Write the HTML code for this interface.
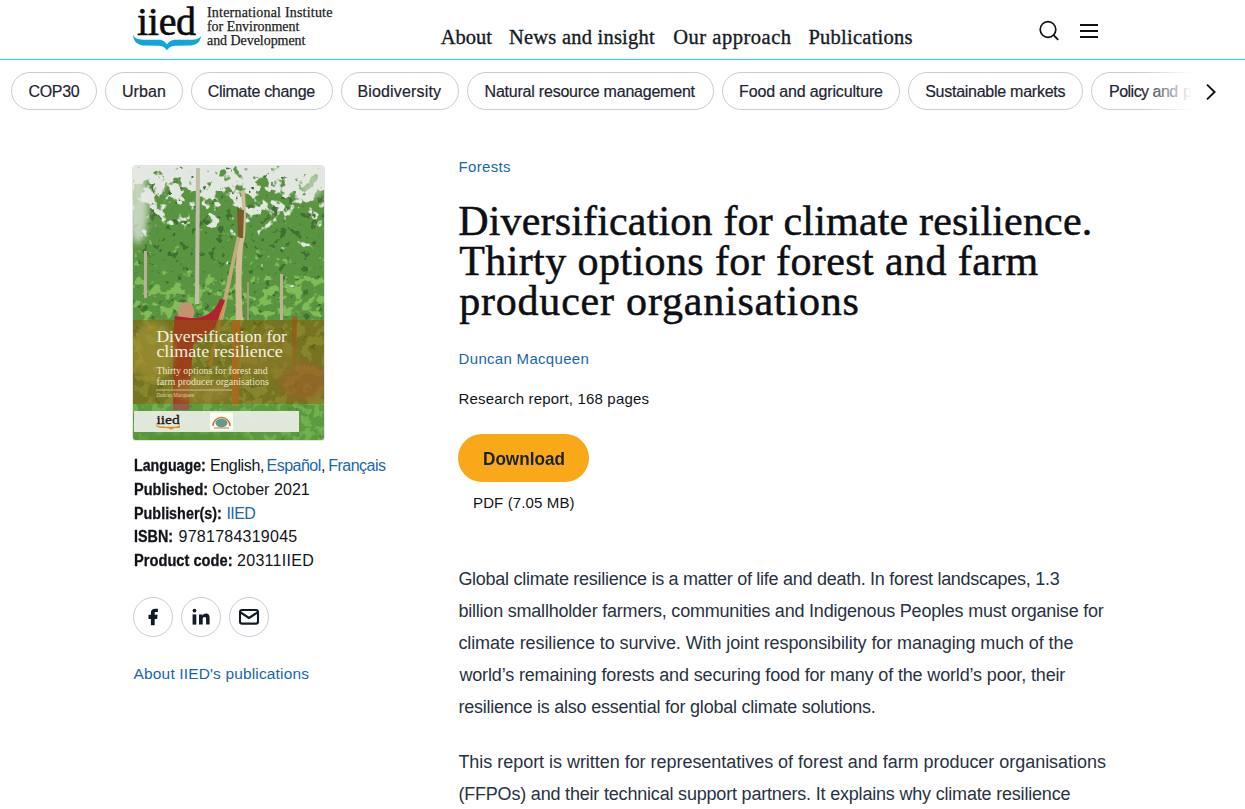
<!DOCTYPE html>
<html lang="en">
<head>
<meta charset="utf-8">
<title>Diversification for climate resilience | IIED</title>
<style>
html,body{margin:0;padding:0;background:#fff;}
body{width:1245px;height:809px;overflow:hidden;position:relative;font-family:"Liberation Sans",sans-serif;}
.s{position:absolute;}
.pill{position:absolute;top:72px;height:36px;border:1px solid #c8ccd5;border-radius:19px;}
.share{position:absolute;top:597px;width:38px;height:38px;border:1px solid #c8ccd5;border-radius:50%;}
.t{position:absolute;white-space:nowrap;line-height:1;margin:0;padding:0;}
.bl{display:inline-block;width:0;height:0;vertical-align:baseline;}
</style>
</head>
<body>
<svg class="s" style="left:130px;top:33px" width="74" height="20" viewBox="0 0 74 20"><path d="M3,2 C3.5,9 8,12.6 16,12.6 L29,12.8 C33.5,13 36,15.5 37,17.6 C38,15.5 40.5,13 45,12.8 L58,12.6 C66,12.6 70.5,9.5 71,3 C69,6.5 65,6.8 58,6.8 L46,6.8 C41,6.8 38.5,9 37,11.6 C35.5,9 33,6.8 28,6.8 L16,6.8 C9,6.8 5,6 3,2 Z" fill="#0fa6dc"/></svg>
<svg class="s" style="left:1038px;top:20px" width="22" height="22" viewBox="0 0 22 22"><circle cx="10" cy="9.5" r="7.8" fill="none" stroke="#111" stroke-width="1.7"/><line x1="15.6" y1="15.1" x2="20.2" y2="19.8" stroke="#111" stroke-width="1.8"/></svg>
<svg class="s" style="left:1080px;top:23px" width="18" height="16" viewBox="0 0 18 16"><rect x="0" y="1" width="18" height="2" fill="#111"/><rect x="0" y="7" width="18" height="2" fill="#111"/><rect x="0" y="13" width="18" height="2" fill="#111"/></svg>
<div class="s" style="left:0;top:59px;width:1245px;height:1px;background:#22d2fd;"></div>
<div class="pill" style="left:11px;width:84px;"></div>
<div class="pill" style="left:105px;width:76px;"></div>
<div class="pill" style="left:191px;width:140px;"></div>
<div class="pill" style="left:341px;width:116px;"></div>
<div class="pill" style="left:467px;width:245px;"></div>
<div class="pill" style="left:722px;width:176px;"></div>
<div class="pill" style="left:908px;width:173px;"></div>
<div class="pill" style="left:1091px;width:200px;"></div>
<div class="s" style="left:458px;top:434px;width:131px;height:48px;border-radius:24px;background:#f9a819;"></div>
<div class="share" style="left:133px;"></div>
<div class="share" style="left:181px;"></div>
<div class="share" style="left:229px;"></div>
<svg class="s" style="left:133px;top:597px" width="40" height="40" viewBox="0 0 40 40"><path d="M17.9,28.2 V21.9 H15.5 V17.7 H17.9 V16 C17.9,13 19.5,11.7 22.3,11.7 H24.9 V15 H23 C22,15 21.7,15.5 21.7,16.5 V17.7 H24.6 L24.1,21.9 H21.7 V28.2 Z" fill="#111a27"/></svg>
<svg class="s" style="left:181px;top:597px" width="40" height="40" viewBox="0 0 40 40"><circle cx="13.5" cy="13.6" r="1.9" fill="#111a27"/><rect x="11.6" y="17.4" width="3.7" height="10.2" fill="#111a27"/><path d="M18,27.6 V17.4 H21.5 V18.7 C22.2,17.4 23.6,16.6 25.1,16.6 C27.6,16.6 28.6,18.2 28.6,21.2 V27.6 H25.1 V21.9 C25.1,20.6 24.6,20 23.6,20 C22.4,20 21.7,20.8 21.7,22.2 V27.6 Z" fill="#111a27"/></svg>
<svg class="s" style="left:229px;top:597px" width="40" height="40" viewBox="0 0 40 40"><rect x="11" y="13" width="18" height="13.6" rx="2.2" fill="none" stroke="#111a27" stroke-width="2.1"/><path d="M11.5,15.4 L20,21 L28.5,15.4" fill="none" stroke="#111a27" stroke-width="2.2" stroke-linejoin="round"/></svg>
<div class="s" style="left:133px;top:166px;width:191px;height:274px;border-radius:3px;overflow:hidden;box-shadow:0 0 0 1px #e3e5e8;">
<svg width="191" height="274" viewBox="0 0 191 274" style="display:block">
<defs>
<filter id="bl3" x="-30%" y="-30%" width="160%" height="160%"><feGaussianBlur stdDeviation="3"/></filter>
<filter id="bl1" x="-20%" y="-20%" width="140%" height="140%"><feGaussianBlur stdDeviation="0.7"/></filter>
<linearGradient id="d1" x1="0" y1="0" x2="0" y2="274" gradientUnits="userSpaceOnUse">
<stop offset="0" stop-color="#505050"/><stop offset="0.12" stop-color="#909090"/><stop offset="0.3" stop-color="#d0d0d0"/><stop offset="1" stop-color="#ffffff"/>
</linearGradient>
<linearGradient id="d2" x1="0" y1="0" x2="0" y2="274" gradientUnits="userSpaceOnUse">
<stop offset="0" stop-color="#404040"/><stop offset="0.2" stop-color="#686868"/><stop offset="0.5" stop-color="#585858"/><stop offset="1" stop-color="#484848"/>
</linearGradient>
<linearGradient id="d3" x1="0" y1="0" x2="0" y2="274" gradientUnits="userSpaceOnUse">
<stop offset="0" stop-color="#000000"/><stop offset="0.25" stop-color="#303030"/><stop offset="0.45" stop-color="#7a7a7a"/><stop offset="1" stop-color="#808080"/>
</linearGradient>
<filter id="lf1" x="0" y="0" width="100%" height="100%" color-interpolation-filters="sRGB">
<feTurbulence type="fractalNoise" baseFrequency="0.08" numOctaves="3" seed="7" result="n"/>
<feColorMatrix in="n" type="matrix" values="1 0 0 0 0  0 1 0 0 0  0 0 1 0 0  0 0 0 0 1" result="n1"/>
<feComposite in="n1" in2="SourceGraphic" operator="arithmetic" k1="0" k2="1" k3="1" k4="-0.5" result="m"/>
<feColorMatrix in="m" type="matrix" values="0 0 0 0 0.35  0 0 0 0 0.58  0 0 0 0 0.25  12 0 0 0 -6"/>
<feGaussianBlur stdDeviation="0.5"/>
</filter>
<filter id="lf2" x="0" y="0" width="100%" height="100%" color-interpolation-filters="sRGB">
<feTurbulence type="fractalNoise" baseFrequency="0.13" numOctaves="3" seed="21" result="n"/>
<feColorMatrix in="n" type="matrix" values="1 0 0 0 0  0 1 0 0 0  0 0 1 0 0  0 0 0 0 1" result="n1"/>
<feComposite in="n1" in2="SourceGraphic" operator="arithmetic" k1="0" k2="1" k3="1" k4="-0.5" result="m"/>
<feColorMatrix in="m" type="matrix" values="0 0 0 0 0.25  0 0 0 0 0.44  0 0 0 0 0.19  12 0 0 0 -6"/>
<feGaussianBlur stdDeviation="0.5"/>
</filter>
<filter id="lf3" x="0" y="0" width="100%" height="100%" color-interpolation-filters="sRGB">
<feTurbulence type="fractalNoise" baseFrequency="0.1" numOctaves="3" seed="42" result="n"/>
<feColorMatrix in="n" type="matrix" values="1 0 0 0 0  0 1 0 0 0  0 0 1 0 0  0 0 0 0 1" result="n1"/>
<feComposite in="n1" in2="SourceGraphic" operator="arithmetic" k1="0" k2="1" k3="1" k4="-0.5" result="m"/>
<feColorMatrix in="m" type="matrix" values="0 0 0 0 0.5  0 0 0 0 0.74  0 0 0 0 0.35  12 0 0 0 -6"/>
<feGaussianBlur stdDeviation="0.5"/>
</filter>
</defs>
<rect width="191" height="274" fill="#e3e7e1"/>
<rect width="191" height="274" fill="url(#d1)" filter="url(#lf1)"/>
<rect width="191" height="274" fill="url(#d2)" filter="url(#lf2)"/>
<rect width="191" height="274" fill="url(#d3)" filter="url(#lf3)"/>
<g filter="url(#bl3)"><ellipse cx="5" cy="40" rx="10" ry="38" fill="#e6e9e3" fill-opacity="0.75"/><ellipse cx="178" cy="18" rx="12" ry="14" fill="#e3e7e0" fill-opacity="0.6"/></g>

<g filter="url(#bl1)">
<!-- trunks -->
<path d="M63,2 L67,2 L66,138 L62,138 Z" fill="#c3c0aa"/>
<path d="M11,85 L14,85 L14,132 L11,132 Z" fill="#b9b196"/>
<path d="M147,108 L150,108 L150,154 L147,154 Z" fill="#bdb28c"/>
<path d="M114,116 L116,116 L116,154 L114,154 Z" fill="#a89a70"/>
<path d="M108,25 C110,50 110,68 104,80 C102,110 102,140 104,154 L110,154 C108,130 108,110 110,80 C114,66 113,45 112,25 Z" fill="#cfbd95"/>
<path d="M104,44 L111,44 L110,72 L105,72 Z" fill="#7a5a2a"/>
<path d="M86,152 L104,70 L107,72 L90,154 Z" fill="#c2ab7a"/>
</g>
<g filter="url(#bl1)">
<path d="M103,134 L109,134 L108,154 L103,154 Z" fill="#cdbb92"/><path d="M99,154 L107,154 L106,240 L99,240 Z" fill="#d07a30" fill-opacity="0.9"/>
<path d="M159,150 L164,150 L163,200 L159,200 Z" fill="#9c5a28" fill-opacity="0.8"/>
<path d="M75,200 L90,134 L93,135 L79,200 Z" fill="#c8924a" fill-opacity="0.8"/>
<!-- woman -->
<ellipse cx="53" cy="146" rx="8.5" ry="10" fill="#c29470"/>
<path d="M42,150 C38,175 41,205 40,244 L56,244 C57,215 59,195 60,178 C66,174 72,170 82,162 C86,150 90,140 92,134 L87,133 C82,146 74,150 64,152 L58,152 Z" fill="#b0202e"/>
<path d="M40,236 L56,236 L56,244 L40,244 Z" fill="#c02a6a" fill-opacity="0.7"/>
</g>
<!-- olive overlay band -->
<g>
<rect x="0" y="154" width="191" height="84" fill="#8a5a08" fill-opacity="0.55"/>
<g filter="url(#bl3)" opacity="0.6">
<ellipse cx="20" cy="185" rx="22" ry="30" fill="#a89638"/>
<ellipse cx="170" cy="215" rx="25" ry="20" fill="#a0602a"/>
<ellipse cx="135" cy="190" rx="30" ry="22" fill="#8e7a2c"/>
<ellipse cx="70" cy="225" rx="30" ry="12" fill="#9a8434"/>
</g>
</g>

<!-- cover title -->
<text x="23.4" y="176" font-family="Liberation Serif" font-size="16.8" fill="#f6f1e4" textLength="130.6" lengthAdjust="spacingAndGlyphs">Diversification for</text>
<text x="23.4" y="191" font-family="Liberation Serif" font-size="16.8" fill="#f6f1e4" textLength="126.3" lengthAdjust="spacingAndGlyphs">climate resilience</text>
<text x="23.4" y="207.5" font-family="Liberation Serif" font-size="10.8" fill="#eee4c8" textLength="111.2" lengthAdjust="spacingAndGlyphs">Thirty options for forest and</text>
<text x="23.4" y="218.8" font-family="Liberation Serif" font-size="10.8" fill="#eee4c8" textLength="112.4" lengthAdjust="spacingAndGlyphs">farm producer organisations</text>
<rect x="23" y="223.6" width="76" height="0.8" fill="#d8cfa8"/>
<text x="23.4" y="231" font-family="Liberation Serif" font-size="5.8" fill="#ddd2b0" textLength="38" lengthAdjust="spacingAndGlyphs">Duncan Macqueen</text>
<!-- grass -->
<rect x="0" y="238" width="191" height="36" fill="#5fa23e" fill-opacity="0.45"/>
<g filter="url(#bl3)">

<ellipse cx="60" cy="272" rx="60" ry="5" fill="#4f9232"/>
</g>
<!-- logo band -->
<rect x="1" y="245" width="165" height="21" fill="#eceee8" fill-opacity="0.92"/>
<text x="23.4" y="258" font-family="Liberation Serif" font-size="13.5" fill="#151515" textLength="23.3" lengthAdjust="spacingAndGlyphs" stroke="#151515" stroke-width="0.3">iied</text>
<path d="M22.5,258.5 C23,261.5 27,262 33,262 C36,262.2 37.5,263 38,264 C38.5,263 40,262.2 43,262 C49,262 46.5,261.5 47,258.5 C46,260.5 44,260.7 40,260.7 L36,260.7 C32,260.7 24,260.7 22.5,258.5 Z" fill="#ee8a1a"/>
<rect x="77" y="246.5" width="23" height="18" fill="#fbfbf6"/>
<path d="M80,260 A8.5,8.5 0 0 1 97,260" fill="none" stroke="#c5782e" stroke-width="1.6"/>
<ellipse cx="88.5" cy="257" rx="6" ry="4.2" fill="#5f9c8c"/>
<rect x="81" y="261.5" width="15" height="1" fill="#c5782e"/>
</svg>
</div>

<div class="t" id="logo" style='left:137.00px;top:2.41px;font-family:"Liberation Serif", serif;font-size:40px;font-weight:400;color:#0b0b0b;letter-spacing:-0.300px;-webkit-text-stroke:0.6px #0b0b0b;'>iied<i class="bl"></i></div>
<div class="t" id="lt1" style='left:207.00px;top:5.81px;font-family:"Liberation Serif", serif;font-size:14px;font-weight:400;color:#1e1e1e;letter-spacing:0.205px;-webkit-text-stroke:0.25px #1e1e1e;'>International Institute<i class="bl"></i></div>
<div class="t" id="lt2" style='left:207.00px;top:20.10px;font-family:"Liberation Serif", serif;font-size:14px;font-weight:400;color:#1e1e1e;letter-spacing:-0.043px;-webkit-text-stroke:0.25px #1e1e1e;'>for Environment<i class="bl"></i></div>
<div class="t" id="lt3" style='left:207.00px;top:34.31px;font-family:"Liberation Serif", serif;font-size:14px;font-weight:400;color:#1e1e1e;letter-spacing:-0.050px;-webkit-text-stroke:0.25px #1e1e1e;'>and Development<i class="bl"></i></div>
<div class="t" id="nav1" style='left:440.80px;top:27.11px;font-family:"Liberation Serif", serif;font-size:20.5px;font-weight:400;color:#161b26;letter-spacing:-0.050px;-webkit-text-stroke:0.35px #161b26;'>About<i class="bl"></i></div>
<div class="t" id="nav2" style='left:509.00px;top:27.11px;font-family:"Liberation Serif", serif;font-size:20.5px;font-weight:400;color:#161b26;letter-spacing:0.220px;-webkit-text-stroke:0.35px #161b26;'>News and insight<i class="bl"></i></div>
<div class="t" id="nav3" style='left:673.20px;top:27.11px;font-family:"Liberation Serif", serif;font-size:20.5px;font-weight:400;color:#161b26;letter-spacing:0.527px;-webkit-text-stroke:0.35px #161b26;'>Our approach<i class="bl"></i></div>
<div class="t" id="nav4" style='left:808.40px;top:27.11px;font-family:"Liberation Serif", serif;font-size:20.5px;font-weight:400;color:#161b26;letter-spacing:0.255px;-webkit-text-stroke:0.35px #161b26;'>Publications<i class="bl"></i></div>
<div class="t" id="p1" style='left:28.40px;top:84.00px;font-family:"Liberation Sans", sans-serif;font-size:16px;font-weight:400;color:#1d2433;letter-spacing:-0.275px;-webkit-text-stroke:0.2px #1d2433;'>COP30<i class="bl"></i></div>
<div class="t" id="p2" style='left:122.00px;top:84.00px;font-family:"Liberation Sans", sans-serif;font-size:16px;font-weight:400;color:#1d2433;letter-spacing:0.050px;-webkit-text-stroke:0.2px #1d2433;'>Urban<i class="bl"></i></div>
<div class="t" id="p3" style='left:207.80px;top:84.00px;font-family:"Liberation Sans", sans-serif;font-size:16px;font-weight:400;color:#1d2433;letter-spacing:-0.292px;-webkit-text-stroke:0.2px #1d2433;'>Climate change<i class="bl"></i></div>
<div class="t" id="p4" style='left:357.40px;top:84.00px;font-family:"Liberation Sans", sans-serif;font-size:16px;font-weight:400;color:#1d2433;letter-spacing:0.164px;-webkit-text-stroke:0.2px #1d2433;'>Biodiversity<i class="bl"></i></div>
<div class="t" id="p5" style='left:484.60px;top:84.00px;font-family:"Liberation Sans", sans-serif;font-size:16px;font-weight:400;color:#1d2433;letter-spacing:-0.219px;-webkit-text-stroke:0.2px #1d2433;'>Natural resource management<i class="bl"></i></div>
<div class="t" id="p6" style='left:739.00px;top:84.00px;font-family:"Liberation Sans", sans-serif;font-size:16px;font-weight:400;color:#1d2433;letter-spacing:-0.147px;-webkit-text-stroke:0.2px #1d2433;'>Food and agriculture<i class="bl"></i></div>
<div class="t" id="p7" style='left:925.20px;top:84.00px;font-family:"Liberation Sans", sans-serif;font-size:16px;font-weight:400;color:#1d2433;letter-spacing:-0.261px;-webkit-text-stroke:0.2px #1d2433;'>Sustainable markets<i class="bl"></i></div>
<div class="t" id="p8" style='left:1109.00px;top:84.00px;font-family:"Liberation Sans", sans-serif;font-size:16px;font-weight:400;color:#1d2433;letter-spacing:-0.511px;-webkit-text-stroke:0.2px #1d2433;'>Policy and<i class="bl"></i></div>
<div class="t" id="p9" style='left:1183.00px;top:84.00px;font-family:"Liberation Sans", sans-serif;font-size:16px;font-weight:400;color:#1d2433;letter-spacing:0.143px;-webkit-text-stroke:0.2px #1d2433;'>practice<i class="bl"></i></div>
<div class="t" id="forests" style='left:458.60px;top:158.80px;font-family:"Liberation Sans", sans-serif;font-size:15px;font-weight:400;color:#1b66ab;letter-spacing:0.300px;'>Forests<i class="bl"></i></div>
<div class="t" id="t1" style='left:458.20px;top:199.60px;font-family:"Liberation Serif", serif;font-size:42px;font-weight:400;color:#0d0f14;letter-spacing:0.174px;-webkit-text-stroke:0.5px #0d0f14;'>Diversification for climate resilience.<i class="bl"></i></div>
<div class="t" id="t2" style='left:459.20px;top:239.60px;font-family:"Liberation Serif", serif;font-size:42px;font-weight:400;color:#0d0f14;letter-spacing:0.406px;-webkit-text-stroke:0.5px #0d0f14;'>Thirty options for forest and farm<i class="bl"></i></div>
<div class="t" id="t3" style='left:459.20px;top:279.82px;font-family:"Liberation Serif", serif;font-size:42px;font-weight:400;color:#0d0f14;letter-spacing:0.795px;-webkit-text-stroke:0.5px #0d0f14;'>producer organisations<i class="bl"></i></div>
<div class="t" id="author" style='left:458.60px;top:350.61px;font-family:"Liberation Sans", sans-serif;font-size:15px;font-weight:400;color:#1b66ab;letter-spacing:0.307px;'>Duncan Macqueen<i class="bl"></i></div>
<div class="t" id="rr" style='left:458.60px;top:390.80px;font-family:"Liberation Sans", sans-serif;font-size:15px;font-weight:400;color:#111419;letter-spacing:0.176px;'>Research report, 168 pages<i class="bl"></i></div>
<div class="t" id="dl" style='transform:scaleX(0.9024);transform-origin:0 0;left:482.60px;top:448.81px;font-family:"Liberation Sans", sans-serif;font-size:19px;font-weight:700;color:#1a2236;letter-spacing:0.000px;'>Download<i class="bl"></i></div>
<div class="t" id="pdf" style='left:473.00px;top:494.91px;font-family:"Liberation Sans", sans-serif;font-size:15px;font-weight:400;color:#111419;letter-spacing:0.133px;'>PDF (7.05 MB)<i class="bl"></i></div>
<div class="t" id="b1_0" style='left:458.40px;top:569.72px;font-family:"Liberation Sans", sans-serif;font-size:18px;font-weight:400;color:#283242;letter-spacing:-0.272px;'>Global climate resilience is a matter of life and death. In forest landscapes, 1.3<i class="bl"></i></div>
<div class="t" id="b1_1" style='left:458.40px;top:601.72px;font-family:"Liberation Sans", sans-serif;font-size:18px;font-weight:400;color:#283242;letter-spacing:-0.211px;'>billion smallholder farmers, communities and Indigenous Peoples must organise for<i class="bl"></i></div>
<div class="t" id="b1_2" style='left:458.40px;top:633.72px;font-family:"Liberation Sans", sans-serif;font-size:18px;font-weight:400;color:#283242;letter-spacing:-0.090px;'>climate resilience to survive. With joint responsibility for managing much of the<i class="bl"></i></div>
<div class="t" id="b1_3" style='left:459.40px;top:665.72px;font-family:"Liberation Sans", sans-serif;font-size:18px;font-weight:400;color:#283242;letter-spacing:-0.150px;'>world’s remaining forests and securing food for many of the world’s poor, their<i class="bl"></i></div>
<div class="t" id="b1_4" style='left:458.40px;top:697.72px;font-family:"Liberation Sans", sans-serif;font-size:18px;font-weight:400;color:#283242;letter-spacing:-0.225px;'>resilience is also essential for global climate solutions.<i class="bl"></i></div>
<div class="t" id="b2_0" style='left:458.40px;top:753.00px;font-family:"Liberation Sans", sans-serif;font-size:18px;font-weight:400;color:#283242;letter-spacing:-0.033px;'>This report is written for representatives of forest and farm producer organisations<i class="bl"></i></div>
<div class="t" id="b2_1" style='left:458.40px;top:785.00px;font-family:"Liberation Sans", sans-serif;font-size:18px;font-weight:400;color:#283242;letter-spacing:-0.192px;'>(FFPOs) and their technical support partners. It explains why climate resilience<i class="bl"></i></div>
<div class="t" id="m1a" style='transform:scaleX(0.8875);transform-origin:0 0;left:134.00px;top:458.11px;font-family:"Liberation Sans", sans-serif;font-size:16px;font-weight:700;color:#111419;letter-spacing:0.000px;-webkit-text-stroke:0.3px #111419;'>Language:<i class="bl"></i></div>
<div class="t" id="m1b" style='left:210.00px;top:458.10px;font-family:"Liberation Sans", sans-serif;font-size:16px;font-weight:400;color:#111419;letter-spacing:-0.357px;'>English,<i class="bl"></i></div>
<div class="t" id="m1c" style='left:266.60px;top:458.10px;font-family:"Liberation Sans", sans-serif;font-size:16px;font-weight:400;color:#1b66ab;letter-spacing:-0.533px;'>Español<i class="bl"></i></div>
<div class="t" id="m1d" style='left:321.00px;top:458.10px;font-family:"Liberation Sans", sans-serif;font-size:16px;font-weight:400;color:#111419;letter-spacing:0.000px;'>,<i class="bl"></i></div>
<div class="t" id="m1e" style='left:328.20px;top:458.10px;font-family:"Liberation Sans", sans-serif;font-size:16px;font-weight:400;color:#1b66ab;letter-spacing:-0.514px;'>Français<i class="bl"></i></div>
<div class="t" id="m2a" style='transform:scaleX(0.9063);transform-origin:0 0;left:134.00px;top:481.80px;font-family:"Liberation Sans", sans-serif;font-size:16px;font-weight:700;color:#111419;letter-spacing:0.000px;-webkit-text-stroke:0.3px #111419;'>Published:<i class="bl"></i></div>
<div class="t" id="m2b" style='left:212.20px;top:481.81px;font-family:"Liberation Sans", sans-serif;font-size:16px;font-weight:400;color:#111419;letter-spacing:0.055px;'>October 2021<i class="bl"></i></div>
<div class="t" id="m3a" style='transform:scaleX(0.8981);transform-origin:0 0;left:134.00px;top:505.50px;font-family:"Liberation Sans", sans-serif;font-size:16px;font-weight:700;color:#111419;letter-spacing:0.000px;-webkit-text-stroke:0.3px #111419;'>Publisher(s):<i class="bl"></i></div>
<div class="t" id="m3b" style='left:226.40px;top:505.51px;font-family:"Liberation Sans", sans-serif;font-size:16px;font-weight:400;color:#1b66ab;letter-spacing:-0.567px;'>IIED<i class="bl"></i></div>
<div class="t" id="m4a" style='transform:scaleX(0.8963);transform-origin:0 0;left:134.00px;top:529.20px;font-family:"Liberation Sans", sans-serif;font-size:16px;font-weight:700;color:#111419;letter-spacing:0.000px;-webkit-text-stroke:0.3px #111419;'>ISBN:<i class="bl"></i></div>
<div class="t" id="m4b" style='left:178.60px;top:529.20px;font-family:"Liberation Sans", sans-serif;font-size:16px;font-weight:400;color:#111419;letter-spacing:0.242px;'>9781784319045<i class="bl"></i></div>
<div class="t" id="m5a" style='transform:scaleX(0.9159);transform-origin:0 0;left:134.00px;top:553.00px;font-family:"Liberation Sans", sans-serif;font-size:16px;font-weight:700;color:#111419;letter-spacing:0.000px;-webkit-text-stroke:0.3px #111419;'>Product code:<i class="bl"></i></div>
<div class="t" id="m5b" style='left:237.00px;top:553.01px;font-family:"Liberation Sans", sans-serif;font-size:16px;font-weight:400;color:#111419;letter-spacing:0.300px;'>20311IIED<i class="bl"></i></div>
<div class="t" id="about" style='left:133.60px;top:666.00px;font-family:"Liberation Sans", sans-serif;font-size:15.5px;font-weight:400;color:#1b66ab;letter-spacing:0.146px;'>About IIED&#x27;s publications<i class="bl"></i></div>
<div class="s" style="left:1143px;top:66px;width:49px;height:50px;background:linear-gradient(to right,rgba(255,255,255,0),#fff);"></div>
<div class="s" style="left:1191px;top:62px;width:54px;height:54px;background:#fff;"></div>
<svg class="s" style="left:1203px;top:82px" width="16" height="20" viewBox="0 0 16 20"><path d="M4,2.6 L11.6,10 L4,17.4" fill="none" stroke="#111" stroke-width="1.9"/></svg>

</body>
</html>
